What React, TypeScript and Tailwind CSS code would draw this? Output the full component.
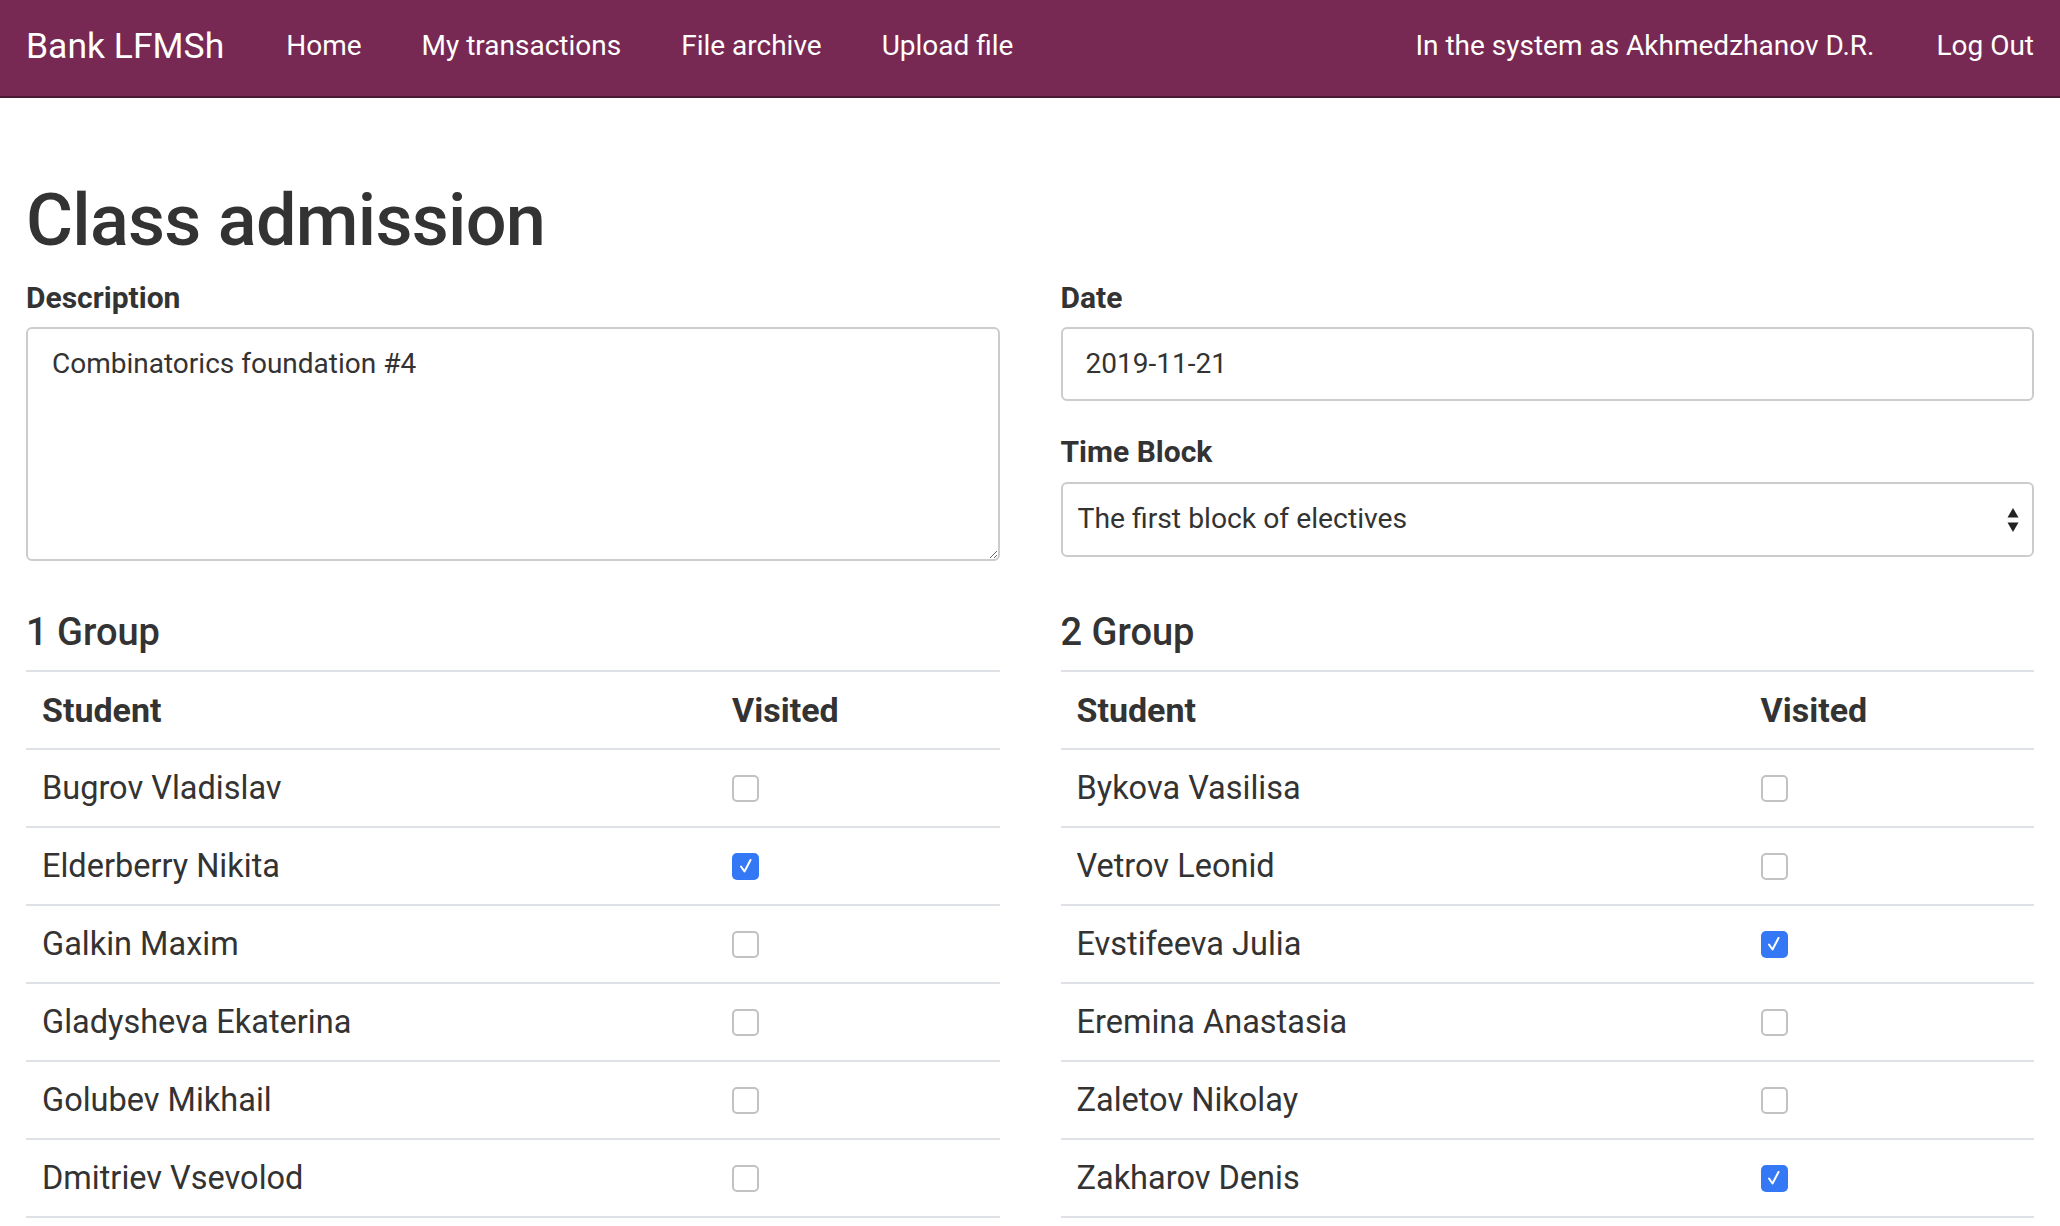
import React from "react";

type Student = { name: string; visited: boolean };

const groupOne: Student[] = [
  { name: "Bugrov Vladislav", visited: false },
  { name: "Elderberry Nikita", visited: true },
  { name: "Galkin Maxim", visited: false },
  { name: "Gladysheva Ekaterina", visited: false },
  { name: "Golubev Mikhail", visited: false },
  { name: "Dmitriev Vsevolod", visited: false },
];

const groupTwo: Student[] = [
  { name: "Bykova Vasilisa", visited: false },
  { name: "Vetrov Leonid", visited: false },
  { name: "Evstifeeva Julia", visited: true },
  { name: "Eremina Anastasia", visited: false },
  { name: "Zaletov Nikolay", visited: false },
  { name: "Zakharov Denis", visited: true },
];

const Checkbox = ({ checked }: { checked: boolean }) => {
  if (checked) {
    return (
      <span className="w-[27px] h-[27px] rounded-[5px] bg-[#3478f6] flex items-center justify-center">
        <svg width="18" height="18" viewBox="0 0 18 18" fill="none">
          <path d="M4 9.5 L7.5 14.5 L13.5 3" stroke="white" strokeWidth="2" strokeLinecap="round" strokeLinejoin="round" />
        </svg>
      </span>
    );
  }
  return <span className="w-[27px] h-[27px] rounded-[5px] border-2 border-[#c2c2c2] bg-white block" />;
};

const GroupTable = ({ title, students, firstCol }: { title: string; students: Student[]; firstCol: string }) => (
  <div>
    <h2 className="text-[38px] leading-[46px] font-medium">{title}</h2>
    <div className="mt-[15px] border-t-2 border-[#dee2e6]">
      <div className="flex items-center h-[78px] border-b-2 border-[#dee2e6] text-[34px] font-bold">
        <div className={`${firstCol} pl-[16px]`}>Student</div>
        <div className="pl-[16px]">Visited</div>
      </div>
      {students.map(s => (
        <div key={s.name} className="flex items-center h-[78px] border-b-2 border-[#dee2e6] text-[32.5px]">
          <div className={`${firstCol} pl-[16px]`}>{s.name}</div>
          <div className="pl-[16px]">
            <Checkbox checked={s.visited} />
          </div>
        </div>
      ))}
    </div>
  </div>
);

export default function App() {
  return (
    <div className="min-h-screen bg-white font-['Roboto',sans-serif] text-[#333333]">
      <nav className="h-[98px] bg-[#772953] border-b-2 border-[#4d1a36] flex items-center px-[26px] pb-[4px] text-white">
        <span className="text-[35.5px] leading-[40px]">Bank LFMSh</span>
        <ul className="flex items-center gap-[60px] ml-[62px] text-[28px] leading-[32px]">
          <li>Home</li>
          <li>My transactions</li>
          <li>File archive</li>
          <li>Upload file</li>
        </ul>
        <ul className="ml-auto flex items-center gap-[62px] text-[28px] leading-[32px]">
          <li>In the system as Akhmedzhanov D.R.</li>
          <li>Log Out</li>
        </ul>
      </nav>

      <main className="px-[26px] pt-[81px]">
        <h1 className="text-[72px] leading-[84px] font-medium tracking-[-0.01em]">Class admission</h1>

        <div className="mt-[17px] grid grid-cols-2 gap-x-[61px]">
          <div>
            <label className="block text-[30px] leading-[36px] font-bold">Description</label>
            <textarea
              className="mt-[11px] block w-full h-[234px] border-2 border-[#cccccc] rounded-[6px] px-[24px] py-[14px] text-[28px] leading-[42px] text-[#333333] outline-none"
              defaultValue="Combinatorics foundation #4"
            />
          </div>
          <div>
            <label className="block text-[30px] leading-[36px] font-bold">Date</label>
            <div className="mt-[11px] h-[74px] border-2 border-[#cccccc] rounded-[6px] flex items-center px-[23px] text-[28px]">
              2019-11-21
            </div>
            <label className="mt-[33px] block text-[30px] leading-[36px] font-bold">Time Block</label>
            <div className="mt-[12px] h-[75px] border-2 border-[#cccccc] rounded-[6px] flex items-center pl-[15px] pr-[12px] text-[28.3px]">
              <span>The first block of electives</span>
              <svg className="ml-auto" width="14" height="30" viewBox="0 0 14 30">
                <path d="M7 3 L12.5 12.5 L1.5 12.5 Z" fill="#222222" />
                <path d="M1.5 17.5 L12.5 17.5 L7 27 Z" fill="#222222" />
              </svg>
            </div>
          </div>
        </div>

        <div className="mt-[48px] grid grid-cols-2 gap-x-[61px]">
          <GroupTable title="1 Group" students={groupOne} firstCol="w-[690px]" />
          <GroupTable title="2 Group" students={groupTwo} firstCol="w-[684px]" />
        </div>
      </main>
    </div>
  );
}
